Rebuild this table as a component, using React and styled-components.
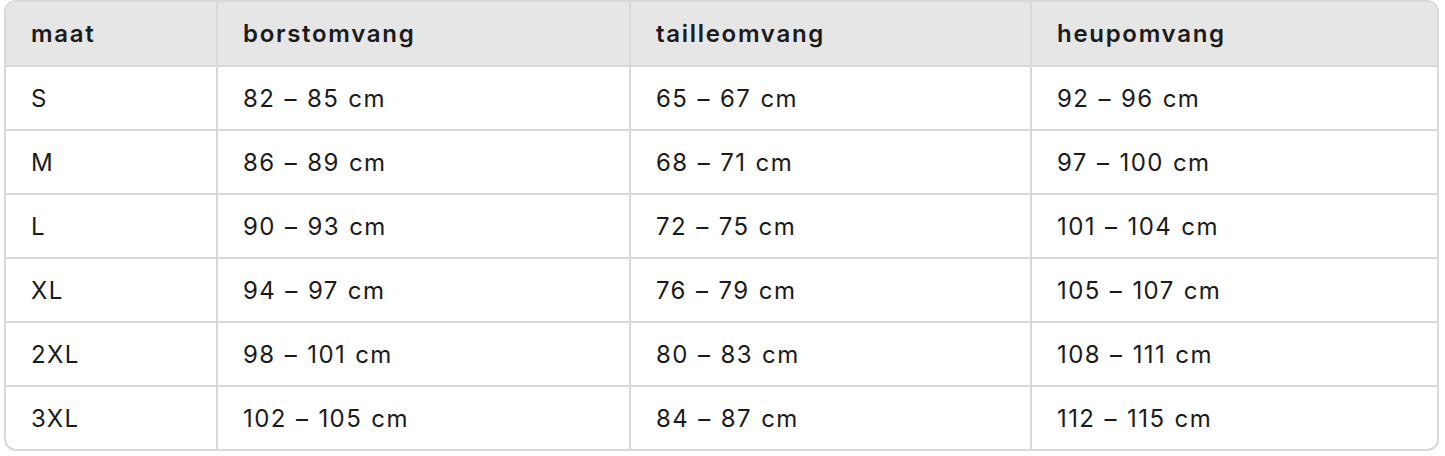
import React from 'react';
import styled, { createGlobalStyle } from 'styled-components';

const Global = createGlobalStyle`
  body {
    margin: 0;
    background: #ffffff;
    font-family: Inter, "Noto Sans", sans-serif;
    color: #1b1b1b;
  }
`;

const Page = styled.div`
  padding: 0 6px 0 4px;
`;

const Frame = styled.div`
  border: 2px solid #d9d9d9;
  border-radius: 12px;
  overflow: hidden;
`;

const Table = styled.table`
  width: 100%;
  border-collapse: collapse;
  table-layout: fixed;
`;

const Head = styled.th`
  background: #e6e6e6;
  font-weight: 600;
  font-size: 24px;
  letter-spacing: 1.7px;
  text-align: left;
  height: 63px;
  padding: 0 0 0 25px;
  border-right: 2px solid #d9d9d9;
  border-bottom: 2px solid #d9d9d9;
  &:last-child { border-right: none; }
`;

const Cell = styled.td`
  font-size: 24px;
  font-weight: 400;
  letter-spacing: 1.4px;
  word-spacing: 1px;
  height: 62px;
  padding: 0 0 0 25px;
  border-right: 2px solid #d9d9d9;
  border-bottom: 2px solid #d9d9d9;
  &:last-child { border-right: none; }
  tr:last-child > & { border-bottom: none; }
`;

const columns = ['maat', 'borstomvang', 'tailleomvang', 'heupomvang'];
const widths = [211, 413, 401, 408];

const rows = [
  ['S', '82 – 85 cm', '65 – 67 cm', '92 – 96 cm'],
  ['M', '86 – 89 cm', '68 – 71 cm', '97 – 100 cm'],
  ['L', '90 – 93 cm', '72 – 75 cm', '101 – 104 cm'],
  ['XL', '94 – 97 cm', '76 – 79 cm', '105 – 107 cm'],
  ['2XL', '98 – 101 cm', '80 – 83 cm', '108 – 111 cm'],
  ['3XL', '102 – 105 cm', '84 – 87 cm', '112 – 115 cm'],
];

const App = () => {
  return (
    <Page>
      <Global />
      <Frame>
        <Table>
          <colgroup>
            {widths.map((w, i) => <col key={i} style={{ width: w }} />)}
          </colgroup>
          <thead>
            <tr>
              {columns.map((c) => <Head key={c}>{c}</Head>)}
            </tr>
          </thead>
          <tbody>
            {rows.map((r) => (
              <tr key={r[0]}>
                {r.map((v, i) => <Cell key={i}>{v}</Cell>)}
              </tr>
            ))}
          </tbody>
        </Table>
      </Frame>
    </Page>
  );
};

export default App;
